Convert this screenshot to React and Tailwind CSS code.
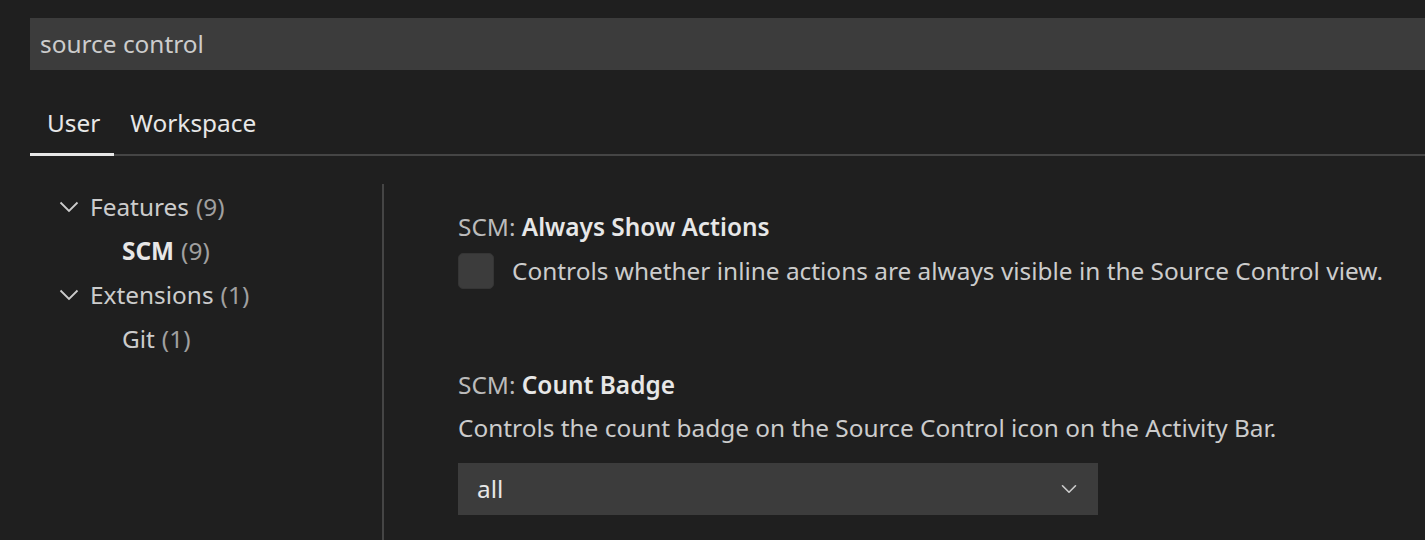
import { ChevronDown } from 'lucide-react'

const font = { fontFamily: '"Noto Sans", "Open Sans", sans-serif' }

function TreeRow({ label, count, depth, bold, chevron }) {
  return (
    <div className="flex h-[44px] items-center">
      <div className={depth ? 'w-[92px]' : 'w-[29px]'} />
      {chevron && (
        <svg width="20" height="12" viewBox="0 0 20 12" className="mr-[11px]" fill="none">
          <path d="M1.5 1.5 L10 10 L18.5 1.5" stroke="#cccccc" strokeWidth="1.8" />
        </svg>
      )}
      <span className={bold ? 'font-bold text-[#e7e7e7]' : 'text-[#cccccc]'}>{label}</span>
      <span className="ml-[7px] text-[#a0a0a0]">({count})</span>
    </div>
  )
}

export default function App() {
  return (
    <div className="h-[540px] w-[1425px] overflow-hidden bg-[#1f1f1f] pl-[30px] pt-[18px] text-[24.4px]" style={font}>
      {/* Search */}
      <div className="flex h-[52px] items-center bg-[#3c3c3c] pl-[10px] text-[#cccccc]">source control</div>

      {/* Tabs */}
      <div className="mt-[37px] flex border-b-2 border-[#454545] leading-[32px]">
        <div className="-mb-[2px] border-b-[3px] border-[#e7e7e7] pb-[14px] pl-[17px] pr-[14px] text-[#e7e7e7]">User</div>
        <div className="px-[16px] pb-[14px] text-[#e7e7e7]">Workspace</div>
      </div>

      <div className="flex">
        {/* Tree */}
        <div className="w-[352px] pt-[29px]">
          <TreeRow label="Features" count={9} chevron />
          <TreeRow label="SCM" count={9} depth bold />
          <TreeRow label="Extensions" count={1} chevron />
          <TreeRow label="Git" count={1} depth />
        </div>
        <div className="mt-[28px] h-[400px] w-[2px] bg-[#454545]" />

        {/* Settings */}
        <div className="flex-1 pl-[74px] pt-[55px]">
          <div className="leading-[32px]">
            <span className="text-[#bbbbbb]">SCM: </span>
            <span className="font-semibold text-[#e7e7e7]">Always Show Actions</span>
          </div>
          <div className="mt-[10px] flex items-center">
            <div className="h-[36px] w-[36px] shrink-0 rounded-[5px] border border-[#353535] bg-[#3c3c3c]" />
            <span className="ml-[18px] whitespace-nowrap leading-[32px] text-[#cccccc]">Controls whether inline actions are always visible in the Source Control view.</span>
          </div>

          <div className="mt-[80px] leading-[32px]">
            <span className="text-[#bbbbbb]">SCM: </span>
            <span className="font-semibold text-[#e7e7e7]">Count Badge</span>
          </div>
          <div className="mt-[11px] whitespace-nowrap leading-[32px] text-[#cccccc]">Controls the count badge on the Source Control icon on the Activity Bar.</div>
          <div className="mt-[19px] flex h-[52px] w-[640px] items-center justify-between bg-[#3c3c3c] pl-[19px] pr-[16px] text-[#e7e7e7]">
            <span>all</span>
            <ChevronDown size={26} strokeWidth={1.5} color="#cccccc" />
          </div>
        </div>
      </div>
    </div>
  )
}
